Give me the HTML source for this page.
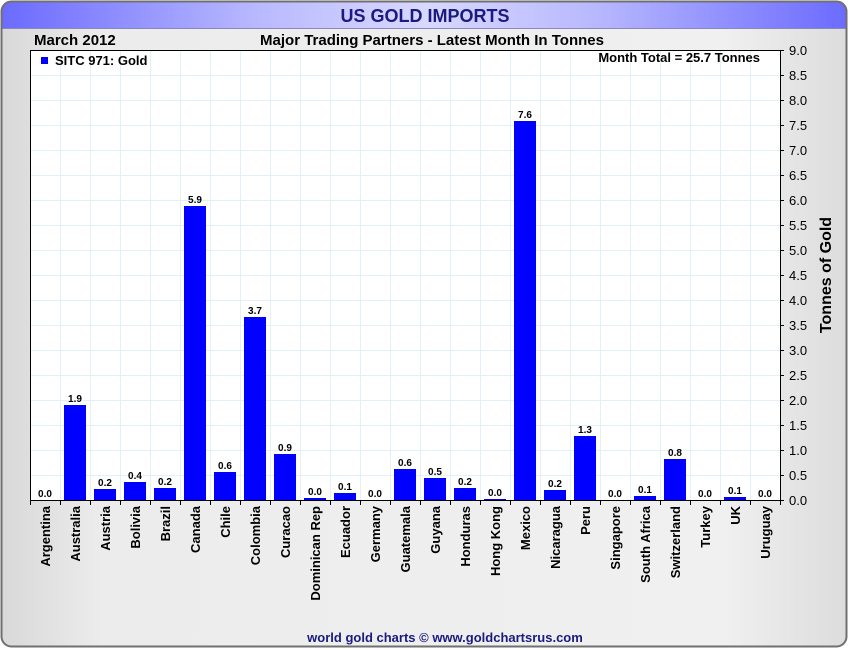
<!DOCTYPE html>
<html><head><style>
html,body{margin:0;padding:0;width:850px;height:650px;overflow:hidden;background:#fff}
svg{display:block;font-family:"Liberation Sans",Arial,sans-serif}
</style></head><body>
<svg width="850" height="650" viewBox="0 0 850 650" xmlns="http://www.w3.org/2000/svg">
<defs>
<linearGradient id="bg" x1="0" x2="1" y1="0" y2="0">
<stop offset="0" stop-color="#d8d8d8"/><stop offset="0.12" stop-color="#ececec"/><stop offset="0.85" stop-color="#f0f0f0"/><stop offset="1" stop-color="#dcdcdc"/></linearGradient>
<linearGradient id="hd" x1="0" x2="1" y1="0" y2="0">
<stop offset="0" stop-color="#6a6aff"/><stop offset="0.3" stop-color="#b8b8ff"/><stop offset="0.5" stop-color="#d8d8ff"/><stop offset="0.7" stop-color="#b8b8ff"/><stop offset="1" stop-color="#6a6aff"/></linearGradient>
<clipPath id="fr"><rect x="1" y="1" width="846" height="646" rx="10"/></clipPath>
</defs>
<g clip-path="url(#fr)">
<rect x="0" y="0" width="850" height="650" fill="url(#bg)"/>
<rect x="0" y="0" width="850" height="28" fill="url(#hd)"/>
<line x1="0" y1="28.5" x2="850" y2="28.5" stroke="#8888bb"/>
</g>
<rect x="1.5" y="1.5" width="845" height="645" rx="10" fill="none" stroke="#707070" stroke-width="2"/>
<text x="425" y="22" text-anchor="middle" font-size="18" font-weight="bold" fill="#1a1a80">US GOLD IMPORTS</text>
<text x="34" y="45" font-size="15" font-weight="bold" fill="#000">March 2012</text>
<text x="432" y="45" text-anchor="middle" font-size="15" font-weight="bold" fill="#000">Major Trading Partners - Latest Month In Tonnes</text>
<rect x="30" y="50" width="750" height="450" fill="#fff"/>
<g stroke="#e2f0f8" stroke-width="1">
<path d="M60.5 50V500M90.5 50V500M120.5 50V500M150.5 50V500M180.5 50V500M210.5 50V500M240.5 50V500M270.5 50V500M300.5 50V500M330.5 50V500M360.5 50V500M390.5 50V500M420.5 50V500M450.5 50V500M480.5 50V500M510.5 50V500M540.5 50V500M570.5 50V500M600.5 50V500M630.5 50V500M660.5 50V500M690.5 50V500M720.5 50V500M750.5 50V500"/>
<path d="M30 75.5H780M30 100.5H780M30 125.5H780M30 150.5H780M30 175.5H780M30 200.5H780M30 225.5H780M30 250.5H780M30 275.5H780M30 300.5H780M30 325.5H780M30 350.5H780M30 375.5H780M30 400.5H780M30 425.5H780M30 450.5H780M30 475.5H780"/>
</g>
<g fill="#0000ff">
<rect x="64" y="405" width="22" height="95"/>
<rect x="94" y="489" width="22" height="11"/>
<rect x="124" y="482" width="22" height="18"/>
<rect x="154" y="488" width="22" height="12"/>
<rect x="184" y="206" width="22" height="294"/>
<rect x="214" y="472" width="22" height="28"/>
<rect x="244" y="317" width="22" height="183"/>
<rect x="274" y="454" width="22" height="46"/>
<rect x="304" y="498" width="22" height="2"/>
<rect x="334" y="493" width="22" height="7"/>
<rect x="394" y="469" width="22" height="31"/>
<rect x="424" y="478" width="22" height="22"/>
<rect x="454" y="488" width="22" height="12"/>
<rect x="484" y="499" width="22" height="1"/>
<rect x="514" y="121" width="22" height="379"/>
<rect x="544" y="490" width="22" height="10"/>
<rect x="574" y="436" width="22" height="64"/>
<rect x="634" y="496" width="22" height="4"/>
<rect x="664" y="459" width="22" height="41"/>
<rect x="724" y="497" width="22" height="3"/>
</g>
<g font-size="10" font-weight="bold" text-anchor="middle" fill="#000">
<text x="45" y="497">0.0</text><text x="75" y="402">1.9</text><text x="105" y="486">0.2</text><text x="135" y="479">0.4</text><text x="165" y="485">0.2</text><text x="195" y="203">5.9</text><text x="225" y="469">0.6</text><text x="255" y="314">3.7</text><text x="285" y="451">0.9</text><text x="315" y="495">0.0</text><text x="345" y="490">0.1</text><text x="375" y="497">0.0</text><text x="405" y="466">0.6</text><text x="435" y="475">0.5</text><text x="465" y="485">0.2</text><text x="495" y="496">0.0</text><text x="525" y="118">7.6</text><text x="555" y="487">0.2</text><text x="585" y="433">1.3</text><text x="615" y="497">0.0</text><text x="645" y="493">0.1</text><text x="675" y="456">0.8</text><text x="705" y="497">0.0</text><text x="735" y="494">0.1</text><text x="765" y="497">0.0</text>
</g>
<rect x="30.5" y="50.5" width="750" height="450" fill="none" stroke="#000"/>
<path d="M30.5 500V505M60.5 500V505M90.5 500V505M120.5 500V505M150.5 500V505M180.5 500V505M210.5 500V505M240.5 500V505M270.5 500V505M300.5 500V505M330.5 500V505M360.5 500V505M390.5 500V505M420.5 500V505M450.5 500V505M480.5 500V505M510.5 500V505M540.5 500V505M570.5 500V505M600.5 500V505M630.5 500V505M660.5 500V505M690.5 500V505M720.5 500V505M750.5 500V505M780.5 500V505" stroke="#000"/>
<path d="M780 50.5H784M780 75.5H784M780 100.5H784M780 125.5H784M780 150.5H784M780 175.5H784M780 200.5H784M780 225.5H784M780 250.5H784M780 275.5H784M780 300.5H784M780 325.5H784M780 350.5H784M780 375.5H784M780 400.5H784M780 425.5H784M780 450.5H784M780 475.5H784M780 500.5H784" stroke="#000"/>
<g font-size="13" fill="#000">
<text x="789" y="55">9.0</text><text x="789" y="80">8.5</text><text x="789" y="105">8.0</text><text x="789" y="130">7.5</text><text x="789" y="155">7.0</text><text x="789" y="180">6.5</text><text x="789" y="205">6.0</text><text x="789" y="230">5.5</text><text x="789" y="255">5.0</text><text x="789" y="280">4.5</text><text x="789" y="305">4.0</text><text x="789" y="330">3.5</text><text x="789" y="355">3.0</text><text x="789" y="380">2.5</text><text x="789" y="405">2.0</text><text x="789" y="430">1.5</text><text x="789" y="455">1.0</text><text x="789" y="480">0.5</text><text x="789" y="505">0.0</text>
</g>
<text transform="translate(831,275) rotate(-90)" text-anchor="middle" font-size="16" font-weight="bold">Tonnes of Gold</text>
<rect x="41" y="57" width="7" height="7" fill="#0000ff"/>
<text x="55" y="65" font-size="13" font-weight="bold">SITC 971: Gold</text>
<text x="760" y="62" text-anchor="end" font-size="13" font-weight="bold">Month Total = 25.7 Tonnes</text>
<g font-size="13" font-weight="bold" text-anchor="end" fill="#000">
<text transform="translate(50,506) rotate(-90)">Argentina</text>
<text transform="translate(80,506) rotate(-90)">Australia</text>
<text transform="translate(110,506) rotate(-90)">Austria</text>
<text transform="translate(140,506) rotate(-90)">Bolivia</text>
<text transform="translate(170,506) rotate(-90)">Brazil</text>
<text transform="translate(200,506) rotate(-90)">Canada</text>
<text transform="translate(230,506) rotate(-90)">Chile</text>
<text transform="translate(260,506) rotate(-90)">Colombia</text>
<text transform="translate(290,506) rotate(-90)">Curacao</text>
<text transform="translate(320,506) rotate(-90)">Dominican Rep</text>
<text transform="translate(350,506) rotate(-90)">Ecuador</text>
<text transform="translate(380,506) rotate(-90)">Germany</text>
<text transform="translate(410,506) rotate(-90)">Guatemala</text>
<text transform="translate(440,506) rotate(-90)">Guyana</text>
<text transform="translate(470,506) rotate(-90)">Honduras</text>
<text transform="translate(500,506) rotate(-90)">Hong Kong</text>
<text transform="translate(530,506) rotate(-90)">Mexico</text>
<text transform="translate(560,506) rotate(-90)">Nicaragua</text>
<text transform="translate(590,506) rotate(-90)">Peru</text>
<text transform="translate(620,506) rotate(-90)">Singapore</text>
<text transform="translate(650,506) rotate(-90)">South Africa</text>
<text transform="translate(680,506) rotate(-90)">Switzerland</text>
<text transform="translate(710,506) rotate(-90)">Turkey</text>
<text transform="translate(740,506) rotate(-90)">UK</text>
<text transform="translate(770,506) rotate(-90)">Uruguay</text>
</g>
<text x="445" y="642" text-anchor="middle" font-size="13" font-weight="bold" fill="#1a1a80">world gold charts © www.goldchartsrus.com</text>
</svg>
</body></html>
